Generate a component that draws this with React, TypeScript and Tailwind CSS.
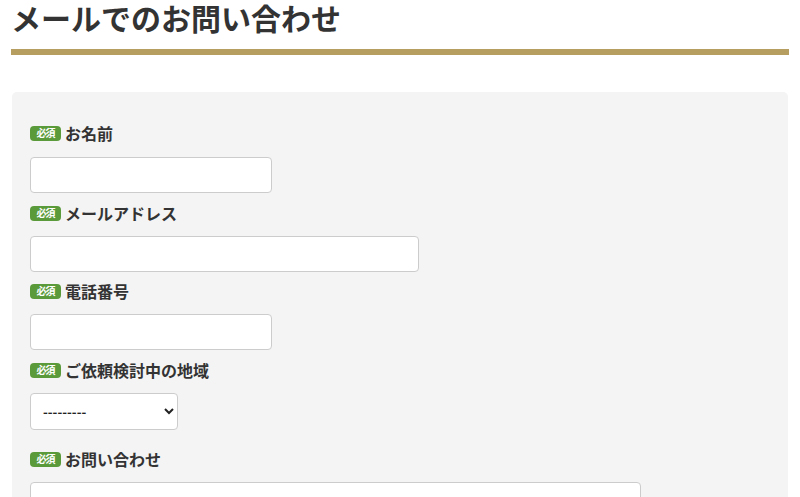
import React from "react";

const font = { fontFamily: '"Noto Sans CJK JP", "Noto Sans", sans-serif' };

function Badge() {
  return (
    <span className="inline-flex h-[15px] w-[31px] items-center justify-center rounded-[4px] bg-[#5a9a3a] text-[10px] font-bold leading-none text-white tracking-[-1px]">
      必須
    </span>
  );
}

function Label({ children }: { children: React.ReactNode }) {
  return (
    <div className="flex h-[24px] items-center gap-[4px] text-[16px] font-bold leading-[24px] text-[#333]">
      <Badge />
      <span>{children}</span>
    </div>
  );
}

const inputCls =
  "block h-[36px] rounded-[4px] border border-[#cccccc] bg-white px-2 text-[14px]";

export default function App() {
  return (
    <div className="h-[497px] w-[800px] overflow-hidden bg-white" style={font}>
      <div className="px-[11px]">
        <h1 className="text-[30px] font-bold leading-[34px] text-[#333]">
          メールでのお問い合わせ
        </h1>
        <div className="mt-[15px] h-[6px] w-[778px] bg-[#b59e5f]" />
        <div className="ml-[1px] mt-[37px] w-[776px] rounded-[5px] bg-[#f4f4f4] px-[18px] pt-[29px] pb-10">
          <Label>お名前</Label>
          <input className={`${inputCls} mt-[12px] w-[242px]`} />
          <div className="mt-[8px]">
            <Label>メールアドレス</Label>
          </div>
          <input className={`${inputCls} mt-[11px] w-[389px]`} />
          <div className="mt-[7px]">
            <Label>電話番号</Label>
          </div>
          <input className={`${inputCls} mt-[11px] w-[242px]`} />
          <div className="mt-[8px]">
            <Label>ご依頼検討中の地域</Label>
          </div>
          <select
            className="mt-[11px] block h-[37px] w-[148px] rounded-[4px] border border-[#cccccc] bg-white pl-[8px] pr-[6px] text-[13px] font-bold text-[#222]"
            defaultValue=""
          >
            <option value="">---------</option>
          </select>
          <div className="mt-[17px]">
            <Label>お問い合わせ</Label>
          </div>
          <textarea className="mt-[11px] block h-[120px] w-[611px] resize-none rounded-[4px] border border-[#cccccc] bg-white" />
        </div>
      </div>
    </div>
  );
}
